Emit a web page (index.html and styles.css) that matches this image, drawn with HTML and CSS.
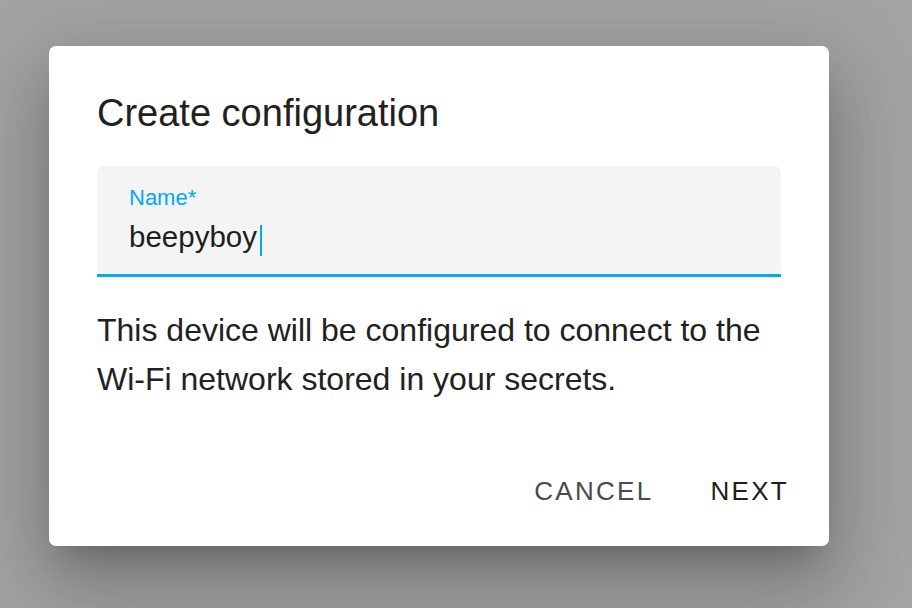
FILE: index.html
```html
<!DOCTYPE html>
<html lang="en">
<head>
<meta charset="utf-8">
<title>Create configuration</title>
<link rel="stylesheet" href="styles.css">
</head>
<body>
<div class="scrim">
  <div class="dialog" role="dialog">
    <h2 class="title">Create configuration</h2>
    <div class="field">
      <div class="label">Name*</div>
      <div class="value">beepyboy<span class="caret"></span></div>
    </div>
    <p class="message">This device will be configured to connect to the Wi-Fi network stored in your secrets.</p>
    <div class="actions">
      <button class="btn btn-cancel">Cancel</button>
      <button class="btn btn-next">Next</button>
    </div>
  </div>
</div>
</body>
</html>
```
FILE: styles.css
```css
html, body {
  margin: 0;
  padding: 0;
  height: 100%;
}
body {
  background: #a3a3a3;
  font-family: "Liberation Sans", Arial, sans-serif;
  overflow: hidden;
}
.scrim {
  padding: 46px 0 0 49px;
}
.dialog {
  box-sizing: border-box;
  width: 780px;
  height: 500px;
  background: #fff;
  border-radius: 7px;
  padding: 44px 48px 0 48px;
  box-shadow: 0 21px 28px -13px rgba(0,0,0,.2),
              0 45px 71px 6px rgba(0,0,0,.14),
              0 17px 86px 15px rgba(0,0,0,.12);
}
.title {
  margin: 0;
  font-weight: 400;
  font-size: 38px;
  line-height: 46px;
  color: #212121;
}
.field {
  box-sizing: border-box;
  margin-top: 30px;
  height: 111px;
  background: #f4f4f4;
  border-radius: 7px 7px 0 0;
  border-bottom: 3px solid #03a9f4;
  padding: 19px 32px 0 32px;
}
.label {
  font-size: 22px;
  line-height: 26px;
  color: #03a9f4;
}
.value {
  margin-top: 8px;
  font-size: 29.5px;
  line-height: 36px;
  color: #1e1e1e;
}
.caret {
  display: inline-block;
  width: 2px;
  height: 31px;
  margin-left: 3px;
  background: #03a9f4;
  vertical-align: -9px;
}
.message {
  margin: 29px 0 0 0;
  font-size: 32px;
  line-height: 49px;
  color: #212121;
  max-width: 690px;
}
.actions {
  display: flex;
  justify-content: flex-end;
  gap: 27px;
  margin: 69px -23px 0 0;
}
.btn {
  background: none;
  border: none;
  padding: 0 15px;
  font-family: "Liberation Sans", Arial, sans-serif;
  font-size: 26px;
  line-height: 36px;
  letter-spacing: 2.3px;
  text-transform: uppercase;
}
.btn-cancel {
  color: #4a4a4a;
}
.btn-next {
  color: #1e1e1e;
}
```
